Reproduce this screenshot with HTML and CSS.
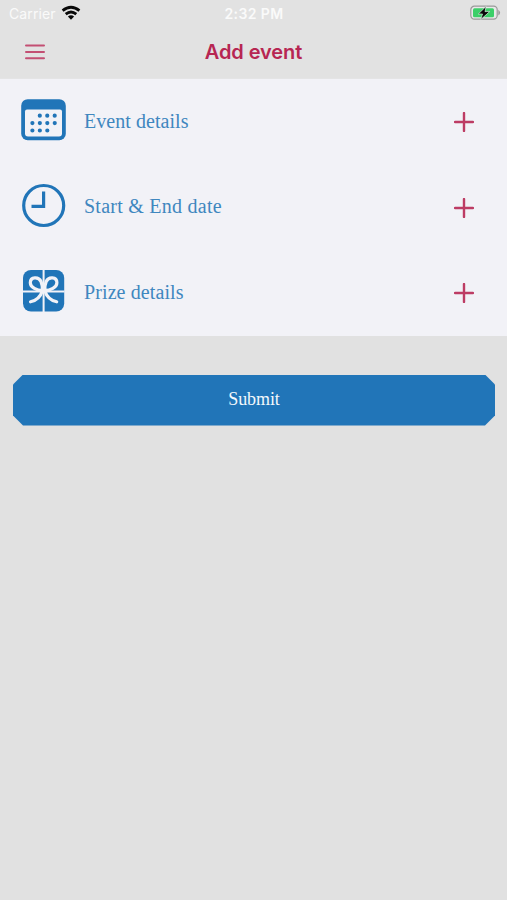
FILE: index.html
```html
<!DOCTYPE html>
<html lang="en">
<head>
<meta charset="utf-8">
<title>Add event</title>
<link rel="stylesheet" href="styles.css">
</head>
<body>
<header class="header">
  <div class="status">
    <div class="carrier"><span>Carrier</span>
      <svg width="20" height="16" viewBox="0 0 20 16" fill="none" stroke="#080808" stroke-width="2.8"><path d="M1.6 5.7Q10-1.1 18.4 5.7M4.7 9.1Q10 4.8 15.3 9.1"/><path d="M6.9 11.5Q10 9.1 13.1 11.5L10 14.7Z" fill="#080808" stroke="none"/></svg>
    </div>
    <span class="time">2:32 PM</span>
    <svg class="battery" width="31" height="16" viewBox="0 0 31 16"><rect x=".8" y="1.2" width="26.4" height="13" rx="3.6" fill="#e8e8e8" stroke="#999" stroke-width="1.2"/><rect x="3" y="3.3" width="21" height="9" rx="1.5" fill="#3bcf68"/><path d="M28.3 4.800q3.600 2.900 0 5.800z" fill="#999"/><path d="M16.200 1.300 8.300 9h4.200l-1.800 5.600 9-8h-4.700z" fill="#080808" stroke="#d8f3df" stroke-width=".7"/></svg>
  </div>
  <nav class="nav">
    <svg width="20" height="18" viewBox="0 0 20 18" stroke="#c34f73" stroke-width="2" stroke-linecap="round"><path d="M1 2.500h18M1 9h18M1 15.200h18"/></svg>
    <h1>Add event</h1>
  </nav>
</header>
<main>
  <section class="list">
    <div class="row">
      <svg class="icon" width="46" height="46" viewBox="0 0 46 46"><rect x="1.2" y="2.200" width="44.600" height="41" rx="6.500" fill="#2175b8"/><path d="M5 14.500q0-2 2-2h33q2 0 2 2v22q0 3-3 3H8q-3 0-3-3z" fill="#f2f2f7"/><path d="M19.800 18.700h15M12.400 26.100h22.500M12.400 33.500h15" fill="none" stroke="#2175b8" stroke-width="4.200" stroke-linecap="round" stroke-dasharray="0 7.450"/></svg>
      <span class="label">Event details</span>
      <svg class="plus" width="20" height="20" viewBox="0 0 20 20"><path d="M1 10h18M10 1v18"/></svg>
    </div>
    <div class="row">
      <svg class="icon" width="46" height="46" viewBox="0 0 46 46" fill="none" stroke="#2175b8" stroke-width="3.200"><circle cx="23.700" cy="22.500" r="20"/><path d="M23.600 8.500v14.800H11.500"/></svg>
      <span class="label label-date">Start &amp; End date</span>
      <svg class="plus" width="20" height="20" viewBox="0 0 20 20"><path d="M1 10h18M10 1v18"/></svg>
    </div>
    <div class="row">
      <svg class="icon" width="46" height="46" viewBox="0 0 46 46"><rect x="3" y="2" width="41.200" height="41.500" rx="8" fill="#2175b8"/><g fill="none" stroke="#f2f2f7"><path d="M23.600 2v42M3 23.500h41.500" stroke-width="2"/><path d="M22.500 22.500C17 22.500 10.300 19.500 10.300 14.800C10.300 8.500 18.800 8.500 21 13.500Q22.500 17 22.500 22.500M24.700 22.500C30.200 22.500 36.900 19.500 36.900 14.800C36.900 8.500 28.400 8.500 26.200 13.500Q24.700 17 24.700 22.500M22.500 22.500Q19.500 32 10.500 33.800M24.700 22.500Q27.700 32 36.700 33.800" stroke-width="3.200" stroke-linecap="round" stroke-linejoin="round"/></g></svg>
      <span class="label label-prize">Prize details</span>
      <svg class="plus" width="20" height="20" viewBox="0 0 20 20"><path d="M1 10h18M10 1v18"/></svg>
    </div>
  </section>
  <button class="submit">Submit</button>
</main>
</body>
</html>
```

FILE: styles.css
```css
* { box-sizing: border-box; }
body { margin: 0; min-height: 900px; background: #e1e1e1; }
svg { display: block; flex: none; }
.header { height: 79px; background: #e2e2e2; border-bottom: 1px solid #e4e4e5; font-family: Inter, sans-serif; }
.status { height: 27px; display: grid; grid-template-columns: 1fr auto 1fr; align-items: center; padding: 0 6px 0 9px; color: #fafafa; font-size: 14px; }
.carrier { display: flex; align-items: center; gap: 5px; letter-spacing: .1px; }
.carrier svg { margin-top: -1px; }
.time { margin-right: 2px; font-weight: 600; font-size: 14px; letter-spacing: .4px; }
.battery { justify-self: end; margin-top: -1px; }
.nav { height: 50px; display: grid; grid-template-columns: 20px 1fr 20px; align-items: center; padding: 0 25px; }
.nav h1 { margin: 0; text-align: center; color: #b72652; font-size: 20px; font-weight: 600; letter-spacing: -.1px; }
.list { height: 256.500px; background: #f2f2f7; display: grid; grid-template-rows: repeat(3, 85.500px); }
.row { display: flex; align-items: center; padding: 0 33px 0 20px; }
.label { flex: 1; margin: -2px 0 0 18px; color: #3f87bf; font: 20px/24px "Liberation Serif", serif; letter-spacing: .05px; }
.label-date { letter-spacing: .25px; }
.label-prize { letter-spacing: .1px; }
.icon { margin-top: -3px; }
.plus { margin-top: 1px; fill: none; stroke: #bd3c64; stroke-width: 2.400; stroke-linecap: round; }
.submit { display: block; width: 482px; height: 51px; margin: 39px 0 0 13px; padding: 0 0 2px; border: 0; background: #2175b8; color: #f3f8fc; font: 18px "Liberation Serif", serif; letter-spacing: -.1px; clip-path: polygon(10px 0, 472px 0, 100% 10px, 100% 41px, 472px 100%, 10px 100%, 0 41px, 0 10px); }
```
